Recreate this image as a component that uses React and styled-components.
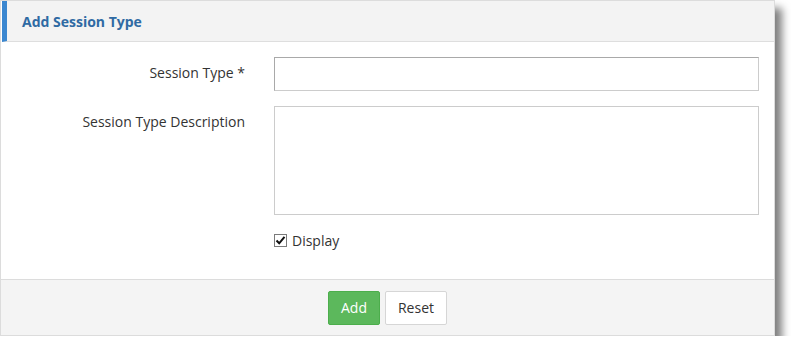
import React, { useState } from 'react'
import styled, { createGlobalStyle } from 'styled-components'

const Global = createGlobalStyle`
    body {
        margin: 0;
        background: #fff;
        font-family: "Open Sans", "Liberation Sans", sans-serif;
        font-size: 14px;
        color: #333;
    }
`;

const Panel = styled.div`
    width: 773px;
    border: 1px solid #dcdcdc;
    background: #fff;
    box-shadow: 7px 8px 8px rgba(0, 0, 0, 0.5);
`;

const Header = styled.div`
    height: 40px;
    display: flex;
    align-items: center;
    background: #f3f3f3;
    border-left: 5px solid #3b87d0;
    margin-left: 1px;
    border-bottom: 1px solid #dedede;
    padding-left: 15px;
`;

const Title = styled.h3`
    margin: 0;
    font-size: 14px;
    font-weight: 700;
    color: #2f6aa3;
`;

const Body = styled.div`
    padding: 15px 15px 29px 0;
`;

const Row = styled.div`
    display: grid;
    grid-template-columns: 244px 1fr;
    column-gap: 29px;
    margin-bottom: ${p => p.$last ? 0 : 15}px;
`;

const Label = styled.label`
    text-align: right;
    padding-top: 6px;
    color: #333;
`;

const Input = styled.input`
    box-sizing: border-box;
    width: 485px;
    height: 34px;
    border: 1px solid #ccc;
    border-top-color: #a9a9a9;
    border-left-color: #a9a9a9;
    font: inherit;
    outline: none;
`;

const TextArea = styled.textarea`
    box-sizing: border-box;
    width: 485px;
    height: 109px;
    border: 1px solid #ccc;
    font: inherit;
    resize: none;
    outline: none;
    display: block;
`;

const Check = styled.label`
    display: flex;
    align-items: center;
    gap: 5px;
    height: 20px;
    color: #333;
    cursor: pointer;
`;

const Box = styled.span`
    box-sizing: border-box;
    width: 13px;
    height: 13px;
    border: 1px solid #7a7a7a;
    background: #fff;
    display: flex;
    align-items: center;
    justify-content: center;
    margin-top: 1px;
`;

const Footer = styled.div`
    height: 55px;
    background: #f4f4f4;
    border-top: 1px solid #dcdcdc;
    display: flex;
    align-items: center;
    justify-content: center;
    gap: 5px;
`;

const Button = styled.button`
    height: 34px;
    padding: 0 12px;
    font-family: inherit;
    font-size: 14px;
    border-radius: 2px;
    cursor: pointer;
    border: 1px solid ${p => p.$primary ? '#4cae4c' : '#d6d6d6'};
    background: ${p => p.$primary ? '#5cb85c' : '#fff'};
    color: ${p => p.$primary ? '#fff' : '#333'};
`;

export default function App() {
    const [display, setDisplay] = useState(true)
    return (
        <>
            <Global />
            <Panel>
                <Header>
                    <Title>Add Session Type</Title>
                </Header>
                <Body>
                    <Row>
                        <Label>Session Type *</Label>
                        <Input type="text" />
                    </Row>
                    <Row>
                        <Label>Session Type Description</Label>
                        <TextArea />
                    </Row>
                    <Row $last>
                        <span />
                        <Check onClick={() => setDisplay(!display)}>
                            <Box>
                                {display && (
                                    <svg width="11" height="11" viewBox="0 0 11 11">
                                        <path d="M1.5 5.5 L4.2 8.3 L9.5 1.8" fill="none" stroke="#111" strokeWidth="2" />
                                    </svg>
                                )}
                            </Box>
                            Display
                        </Check>
                    </Row>
                </Body>
                <Footer>
                    <Button $primary>Add</Button>
                    <Button>Reset</Button>
                </Footer>
            </Panel>
        </>
    )
}
